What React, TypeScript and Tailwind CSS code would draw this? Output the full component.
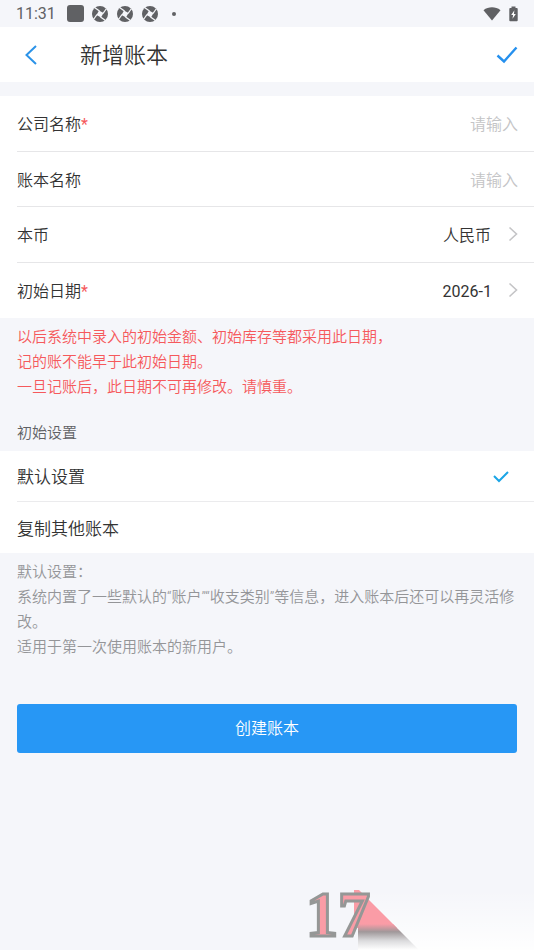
import { useState } from "react";
import type { ReactNode } from "react";

function Shutter() {
  return (
    <svg viewBox="0 0 16 16" className="size-4" aria-hidden="true">
      <circle cx="8" cy="8" r="8" fill="#606164" />
      <path d="M7 4.500L11.500 7L9 11.500L4.500 9Z" fill="#f5f6fa" />
      <g stroke="#f5f6fa" strokeWidth="1.300">
        <path d="M2.500 1.500L7.500 5" />
        <path d="M14.500 2.500L11 7.500" />
        <path d="M13.500 14.500L8.500 11" />
        <path d="M1.500 13.500L5 8.500" />
      </g>
    </svg>
  );
}

function StatusBar() {
  return (
    <div className="flex h-[27px] items-center justify-between pl-4 pr-4 text-[#606164]">
      <div className="flex items-center">
        <span className="w-[51px] text-base font-normal leading-5">11:31</span>
        <span className="mr-2 size-[17px] rounded-[3px] bg-[#606164]" />
        <div className="flex gap-[9px]">
          <Shutter />
          <Shutter />
          <Shutter />
        </div>
        <span className="ml-3.5 size-1 rounded-full bg-[#606164]" />
      </div>
      <div className="flex items-center gap-2">
        <svg viewBox="0 0 18 14" className="h-3.5 w-[18px]" fill="#606164" aria-hidden="true">
          <path d="M0.5 3.2C5.5 -0.6 12.5 -0.6 17.5 3.2L9 13.5Z" />
        </svg>
        <svg viewBox="0 0 9 16" className="h-4 w-[9px]" aria-hidden="true">
          <path d="M2.5 0.5h4v1.5h1.3q0.9 0 0.9 0.9v11.4q0 0.9-0.9 0.9H1.2q-0.9 0-0.9-0.9V2.900q0-0.9 0.900-0.9h1.300z" fill="#606164" />
          <path d="M5.400 4.200L2.200 9h1.900l-0.600 3.800L6.800 8H4.900z" fill="#fff" />
        </svg>
      </div>
    </div>
  );
}

function Chevron() {
  return (
    <svg viewBox="0 0 10 16" className="h-4 w-2.5 shrink-0" fill="none" stroke="#c4c4c6" strokeWidth="1.6" aria-hidden="true">
      <path d="M1.500 1.500L8.500 8L1.500 14.500" />
    </svg>
  );
}

function Row({ label, htmlFor, required, children }: { label: string; htmlFor: string; required?: boolean; children: ReactNode }) {
  return (
    <div className="ml-[17px] flex items-center justify-between border-b border-[#e6e6e8] pr-4 text-base last:border-b-0">
      <label htmlFor={htmlFor} className="shrink-0 pt-1">
        {label}
        {required && <span className="font-normal text-[#f5595c]">*</span>}
      </label>
      {children}
    </div>
  );
}

const modes = ["默认设置", "复制其他账本"];

export default function App() {
  const [mode, setMode] = useState(modes[0]);

  return (
    <div className="relative flex min-h-screen flex-col overflow-hidden bg-[#f5f6fa] font-[Roboto,'Noto_Sans_CJK_SC',sans-serif] font-[350] text-[#333]">
      <StatusBar />
      <header className="flex h-[55px] items-center bg-white pl-6 pr-4">
        <button type="button" aria-label="返回" className="w-14">
          <svg viewBox="0 0 14 20" className="h-5 w-3.5" fill="none" stroke="#2b93e8" strokeWidth="2" aria-hidden="true">
            <path d="M12 1L2.500 10L12 19" />
          </svg>
        </button>
        <h1 className="flex-1 pt-0.5 text-[22px] font-[350] leading-8">新增账本</h1>
        <button type="button" aria-label="保存">
          <svg viewBox="0 0 22 18" className="h-[18px] w-[22px]" fill="none" stroke="#2590ee" strokeWidth="2.400" aria-hidden="true">
            <path d="M1.500 9.500L8 15.500L20.500 1.500" />
          </svg>
        </button>
      </header>

      <section className="mt-3.5 grid h-[222px] grid-rows-4 bg-white">
        <Row label="公司名称" htmlFor="company" required>
          <input id="company" placeholder="请输入" className="min-w-0 flex-1 bg-transparent pt-1 text-right outline-none placeholder:text-[#c4c4c6]" />
        </Row>
        <Row label="账本名称" htmlFor="book">
          <input id="book" placeholder="请输入" className="min-w-0 flex-1 bg-transparent pt-1 text-right outline-none placeholder:text-[#c4c4c6]" />
        </Row>
        <Row label="本币" htmlFor="currency">
          <div className="flex items-center gap-4">
            <select id="currency" className="appearance-none bg-transparent pt-1 outline-none">
              <option>人民币</option>
            </select>
            <Chevron />
          </div>
        </Row>
        <Row label="初始日期" htmlFor="start" required>
          <button id="start" type="button" className="flex items-center gap-4">
            <span className="pt-1 font-normal">2026-1</span>
            <Chevron />
          </button>
        </Row>
      </section>

      <p className="px-[17px] pt-[7px] text-[15px] leading-[25px] text-[#f5595c]">
        以后系统中录入的初始金额、初始库存等都采用此日期，
        <br />
        记的账不能早于此初始日期。
        <br />
        一旦记账后，此日期不可再修改。请慎重。
      </p>

      <h2 className="px-[17px] pb-[5px] pt-[21px] text-[15px] font-[350] leading-[25px] text-[#606164]">初始设置</h2>
      <div role="radiogroup" aria-label="初始设置" className="bg-white">
        {modes.map((name) => (
          <label key={name} className="ml-[17px] flex h-[51px] items-center justify-between border-b border-[#ebebed] pr-6 text-[17px] last:border-b-0">
            <input type="radio" name="mode" className="sr-only" checked={mode === name} onChange={() => setMode(name)} />
            <span className="pt-1">{name}</span>
            {mode === name && (
              <svg viewBox="0 0 18 14" className="h-3.5 w-[18px]" fill="none" stroke="#1ba5e6" strokeWidth="2" aria-hidden="true">
                <path d="M2 7L7 12L16 3" />
              </svg>
            )}
          </label>
        ))}
      </div>

      <p className="pl-[17px] pr-3 pt-[7px] text-[15px] leading-[25px] text-[#949598]">
        默认设置：
        <br />
        系统内置了一些默认的“账户”“收支类别”等信息，进入账本后还可以再灵活修改。
        <br />
        适用于第一次使用账本的新用户。
      </p>

      <button type="button" className="relative z-10 mx-[17px] mt-11 h-[49px] rounded-[3px] bg-[#2797f5] text-base text-white">
        创建账本
      </button>

      <svg viewBox="0 0 234 80" className="pointer-events-none absolute bottom-0 right-0 h-20 w-[234px]" role="img" aria-label="17">
        <defs>
          <linearGradient id="glow" x1="0" y1="0" x2="0" y2="1">
            <stop offset="0" stopColor="#fff" stopOpacity="0" />
            <stop offset="1" stopColor="#fff" stopOpacity="0.9" />
          </linearGradient>
          <linearGradient id="fold" x1="0" y1="0" x2="0" y2="1">
            <stop offset="0" stopColor="#fa9ca6" />
            <stop offset="0.300" stopColor="#a0989a" />
            <stop offset="0.650" stopColor="#dcdcde" />
            <stop offset="1" stopColor="#fff" />
          </linearGradient>
        </defs>
        <path d="M60 20H234V80H117Z" fill="url(#glow)" />
        <path d="M59 20L97 58H54V20Z" fill="#fa9ca6" />
        <path d="M58 54H93L119 80H58Z" fill="url(#fold)" />
        <text x="6" y="66" fontSize="64" fontWeight="700" fontFamily="'Liberation Serif',serif" fill="#fa9ca6" stroke="#959796" strokeWidth="3">
          17
        </text>
      </svg>
    </div>
  );
}
